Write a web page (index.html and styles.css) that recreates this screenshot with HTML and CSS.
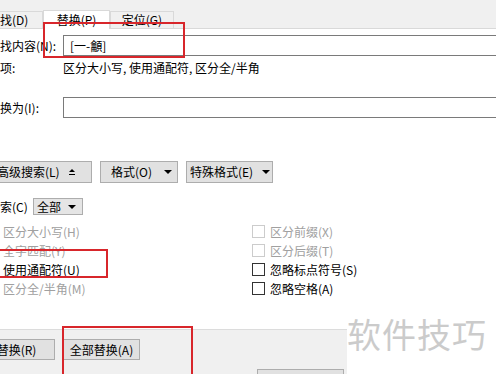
FILE: index.html
```html
<!DOCTYPE html>
<html lang="zh-CN">
<head>
    <meta charset="UTF-8">
    <meta name="viewport" content="width=device-width, initial-scale=1.0">
    <title>查找和替换</title>
    <link rel="stylesheet" href="styles.css">
</head>
<body>
    <div class="dialog">
        <div class="tabs">
            <div class="tab first">查找(D)</div>
            <div class="tab active">替换(P)</div>
            <div class="tab">定位(G)</div>
        </div>

        <div class="content">
            <div class="field find">
                <label>查找内容(N):</label>
                <div class="input">[一-龥]</div>
            </div>
            <div class="field options">
                <span class="label">选项:</span>
                <span>区分大小写, 使用通配符, 区分全/半角</span>
            </div>
            <div class="field replace">
                <label>替换为(I):</label>
                <div class="input"></div>
            </div>

            <div class="buttons">
                <button class="btn less">高级搜索(L)
                    <svg width="6" height="6" viewBox="0 0 6 6"><polygon points="3,0 6,3 0,3" fill="#000"/><rect x="0" y="5" width="6" height="1" fill="#000"/></svg>
                </button>
                <button class="btn format">格式(O)
                    <svg width="8" height="4" viewBox="0 0 8 4"><polygon points="0,0 8,0 4,4" fill="#000"/></svg>
                </button>
                <button class="btn special">特殊格式(E)
                    <svg width="8" height="4" viewBox="0 0 8 4"><polygon points="0,0 8,0 4,4" fill="#000"/></svg>
                </button>
            </div>

            <div class="search">
                <span class="label">搜索(C)</span>
                <div class="select">全部
                    <svg width="8" height="4" viewBox="0 0 8 4"><polygon points="0,0 8,0 4,4" fill="#000"/></svg>
                </div>
            </div>

            <div class="checks">
                <div class="check disabled"><i></i>区分大小写(H)</div>
                <div class="check disabled"><i></i>区分前缀(X)</div>
                <div class="check disabled"><i></i>全字匹配(Y)</div>
                <div class="check disabled"><i></i>区分后缀(T)</div>
                <div class="check"><i></i>使用通配符(U)</div>
                <div class="check"><i></i>忽略标点符号(S)</div>
                <div class="check disabled"><i></i>区分全/半角(M)</div>
                <div class="check"><i></i>忽略空格(A)</div>
            </div>

            <div class="footer">
                <div class="footer-row">
                    <button class="btn wide replace-one">替换(R)</button>
                    <button class="btn wide">全部替换(A)</button>
                </div>
                <div class="footer-row right">
                    <button class="btn prev">查找上一处(B)</button>
                </div>
            </div>
        </div>
    </div>

    <!-- annotations drawn over the screenshot -->
    <div class="mark mark-find"></div>
    <div class="mark mark-wild"></div>
    <div class="mark mark-all"></div>
    <div class="watermark">软件技巧</div>
</body>
</html>
```

FILE: styles.css
```css
html, body {
    margin: 0;
    height: 100%;
}

body {
    position: relative;
    overflow: hidden;
    background: #fff;
    color: #000;
    font-family: "Noto Sans CJK SC", "Noto Sans", sans-serif;
    font-size: 12px;
    line-height: 16px;
}

.dialog {
    width: 496px;
}

/* tab strip */
.tabs {
    display: flex;
    align-items: flex-end;
    height: 29px;
    box-sizing: border-box;
    background: #f0f0f0;
    border-bottom: 1px solid #d9d9d9;
}

.tab {
    width: 62px;
    height: 16px;
    line-height: 16px;
    border: 1px solid #d9d9d9;
    border-bottom: none;
    background: #f0f0f0;
    text-align: center;
}

.tab.first {
    margin-left: -22px;
    width: 54px;
    padding-left: 9px;
    text-align: left;
}

.tab.active {
    width: 65px;
    height: 18px;
    line-height: 17px;
    margin-bottom: -1px;
    background: #fff;
}

/* form rows */
.content {
    margin-left: -12px;
}

.field {
    display: flex;
    align-items: center;
}

.field label,
.field .label {
    width: 75px;
    flex: none;
}

.input {
    width: 460px;
    height: 21px;
    box-sizing: border-box;
    border: 1px solid #7a7a7a;
    padding-left: 6px;
    line-height: 19px;
    flex: none;
}

.find {
    margin-top: 6px;
}

.options {
    margin-top: 4px;
}

.replace {
    margin-top: 21px;
}

/* buttons */
.btn {
    font: inherit;
    color: #000;
    background: #e1e1e1;
    border: 1px solid #adadad;
    border-radius: 0;
    height: 22px;
    box-sizing: border-box;
    margin: 0;
    display: flex;
    align-items: center;
    justify-content: space-between;
    white-space: nowrap;
}

.buttons {
    display: flex;
    gap: 8px;
    margin-top: 43px;
}

.less {
    width: 104px;
    padding: 0 16px 0 8px;
}

.format {
    width: 78px;
    padding: 0 5px 0 10px;
}

.special {
    width: 87px;
    padding: 0 2px 0 3px;
}

/* search scope */
.search {
    display: flex;
    align-items: center;
    margin-top: 15px;
}

.search .label {
    width: 45px;
}

.select {
    width: 50px;
    height: 17px;
    box-sizing: border-box;
    background: #e5e5e5;
    border: 1px solid #adadad;
    display: flex;
    align-items: center;
    justify-content: space-between;
    padding: 0 6px 0 3px;
    line-height: 15px;
}

/* checkbox grid */
.checks {
    display: grid;
    grid-template-columns: 267px 1fr;
    margin-top: 7px;
    margin-left: -3px;
}

.check {
    display: flex;
    align-items: center;
    gap: 5px;
    height: 19px;
}

.check i {
    width: 13px;
    height: 13px;
    box-sizing: border-box;
    border: 1px solid #333;
    background: #fff;
    flex: none;
}

.check.disabled {
    color: #a0a0a0;
}

.check.disabled i {
    border-color: #cccccc;
}

/* bottom bar */
.footer {
    margin-top: 31px;
    width: 359px;
    height: 80px;
    box-sizing: border-box;
    background: #f0f0f0;
    border-top: 1px solid #dcdcdc;
    padding-top: 9px;
}

.footer-row {
    display: flex;
    gap: 8px;
}

.footer-row.right {
    justify-content: flex-end;
    padding-right: 3px;
    margin-top: 9px;
}

.btn.wide {
    width: 77px;
    height: 21px;
    justify-content: center;
    padding: 0;
}

.replace-one {
    margin-left: -10px;
}

.btn.prev {
    width: 87px;
    height: 21px;
    justify-content: center;
    padding: 0;
}

/* red annotation boxes */
.mark {
    position: absolute;
    border: 2px solid #d8262b;
    box-sizing: border-box;
}

.mark-find {
    left: 43px;
    top: 22px;
    width: 142px;
    height: 36px;
}

.mark-wild {
    left: -4px;
    top: 249px;
    width: 112px;
    height: 29px;
}

.mark-all {
    left: 62px;
    top: 326px;
    width: 131px;
    height: 70px;
}

.watermark {
    position: absolute;
    left: 347px;
    top: 314px;
    right: 0;
    bottom: 0;
    background: #fff;
    color: #cbcbcb;
    font-size: 34px;
    line-height: 40px;
    letter-spacing: 1px;
    white-space: nowrap;
}
```
